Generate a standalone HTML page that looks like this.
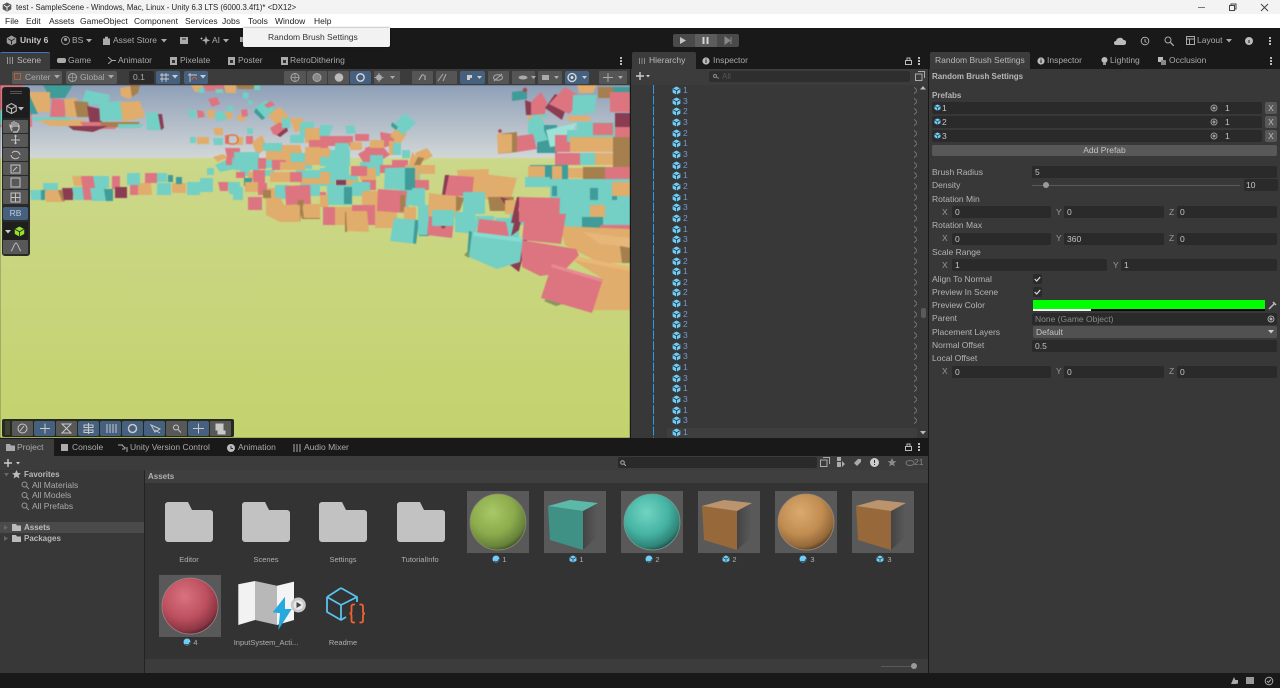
<!DOCTYPE html>
<html><head><meta charset="utf-8"><title>Unity</title>
<style>
html,body{margin:0;padding:0;width:1280px;height:688px;overflow:hidden;background:#191919}
body{font-family:"Liberation Sans",sans-serif;font-size:8.5px;color:#bdbdbd;position:relative}
div,span,svg{position:absolute}
.t{white-space:nowrap;line-height:11px;height:11px}
.d{color:#222}
.f{background:#2a2a2a;border-radius:2px;height:12px;color:#c4c4c4;line-height:12px;padding-left:3px;box-sizing:border-box}
.b{background:#585858;border-radius:2px}
.u{background:#46607f;border-radius:2px}
.g{background:#585858;border-radius:1px}
.l{left:932px;color:#b4b4b4}
.c{text-align:center;font-size:7.5px;color:#b0b0b0;width:76px}
.tp{fill:#dd7580}.tt{fill:#74cfc5}.to{fill:#e0ad6c}.dp{fill:#8a3d52}.dt{fill:#3f9c99}.do{fill:#a67f4e}
#h{left:667px;top:85px;width:250px;height:353px;overflow:hidden}
#h p{margin:0;position:relative;height:10.67px;line-height:10.67px;padding-left:16px;color:#7398d2;font-size:8.5px}
#h p svg{left:5px;top:1px;width:9px;height:9px}
#h p b{position:absolute;left:245px;top:3px;width:4px;height:4px;border-top:1px solid #777;border-right:1px solid #777;transform:rotate(45deg)}
</style></head>
<body>
<svg width="0" height="0" style="left:0;top:0"><defs>
<g id="c"><path d="M5 .5 9.3 2.8V7.3L5 9.6.7 7.3V2.8z" fill="#6fcdf7"/><path d="M1 3 5 5.2 9 3M5 5.2V9.4" stroke="#222" stroke-width=".8" fill="none"/></g>
<g id="fo"><path d="M0 3a3 3 0 0 1 3-3h20l4 8h18a3 3 0 0 1 3 3v26a3 3 0 0 1-3 3H3a3 3 0 0 1-3-3z" fill="#c2c2c2"/></g>
<radialGradient id="sg" cx=".4" cy=".33" r=".72"><stop offset="0" stop-color="#a9c866"/><stop offset=".55" stop-color="#8aaa4c"/><stop offset=".85" stop-color="#66823a"/><stop offset="1" stop-color="#35441f"/></radialGradient>
<radialGradient id="st" cx=".4" cy=".33" r=".72"><stop offset="0" stop-color="#72d4c2"/><stop offset=".55" stop-color="#45b3a3"/><stop offset=".85" stop-color="#2f8478"/><stop offset="1" stop-color="#15433c"/></radialGradient>
<radialGradient id="so" cx=".4" cy=".33" r=".72"><stop offset="0" stop-color="#dba970"/><stop offset=".55" stop-color="#c08c50"/><stop offset=".85" stop-color="#93683a"/><stop offset="1" stop-color="#46301a"/></radialGradient>
<radialGradient id="sr" cx=".4" cy=".33" r=".72"><stop offset="0" stop-color="#d9727f"/><stop offset=".55" stop-color="#bd505f"/><stop offset=".85" stop-color="#8c3644"/><stop offset="1" stop-color="#471c23"/></radialGradient>
<linearGradient id="sky" x1="0" y1="0" x2="0" y2="1"><stop offset="0" stop-color="#8a9cb6"/><stop offset="1" stop-color="#d3d8d8"/></linearGradient>
<linearGradient id="gr" x1="0" y1="0" x2="0" y2="1"><stop offset="0" stop-color="#ccd88a"/><stop offset="1" stop-color="#c4d26d"/></linearGradient>
<linearGradient id="cs" x1="0" y1="0" x2="1" y2="0"><stop offset="0" stop-color="#444"/><stop offset="1" stop-color="#5a5a5a"/></linearGradient>
</defs></svg>

<!-- title & menu -->
<div style="left:0;top:0;width:1280px;height:14px;background:#f3f3f3"></div>
<div style="left:0;top:14px;width:1280px;height:14px;background:#fff"></div>
<svg style="left:2px;top:2px" width="10" height="10" viewBox="0 0 10 10"><path d="M5 .5 9.3 2.8V7.3L5 9.6.7 7.3V2.8z" fill="#555"/><path d="M2 3.4 5 5.2 8 3.4M5 5.2V8.6" stroke="#fff" stroke-width=".9" fill="none"/></svg>
<div class="t d" style="left:16px;top:2px;font-size:7.8px">test - SampleScene - Windows, Mac, Linux - Unity 6.3 LTS (6000.3.4f1)* &lt;DX12&gt;</div>
<div class="t d" style="left:5px;top:16px">File</div>
<div class="t d" style="left:26px;top:16px">Edit</div>
<div class="t d" style="left:49px;top:16px">Assets</div>
<div class="t d" style="left:80px;top:16px">GameObject</div>
<div class="t d" style="left:134px;top:16px">Component</div>
<div class="t d" style="left:185px;top:16px">Services</div>
<div class="t d" style="left:222px;top:16px">Jobs</div>
<div class="t d" style="left:248px;top:16px">Tools</div>
<div class="t d" style="left:275px;top:16px">Window</div>
<div class="t d" style="left:314px;top:16px">Help</div>
<svg style="left:1195px;top:2px" width="85" height="11" viewBox="0 0 85 11"><path d="M3 5.500h7" stroke="#777" stroke-width="1"/><path d="M34.500 3.500h5v5h-5zM36 3.500V2h5v5h-1.500" stroke="#444" fill="none"/><path d="M66 2l7 7M73 2l-7 7" stroke="#444"/></svg>

<!-- toolbar -->
<div style="left:0;top:28px;width:1280px;height:24px;background:#191919"></div>
<svg style="left:6px;top:35px" width="11" height="11" viewBox="0 0 10 10"><path d="M5 .5 9.300 2.800V7.300L5 9.600.7 7.300V2.800z" fill="#999"/><path d="M2 3.400 5 5.200 8 3.400M5 5.200V8.600" stroke="#222" stroke-width=".9" fill="none"/></svg>
<div class="t" style="left:20px;top:35px;font-weight:bold;color:#c8c8c8">Unity 6</div>
<svg style="left:61px;top:36px" width="9" height="9"><circle cx="4.500" cy="4.500" r="4" fill="none" stroke="#999"/><circle cx="4.500" cy="3.500" r="1.600" fill="#999"/></svg>
<div class="t" style="left:72px;top:35px;color:#aaa">BS</div>
<svg style="left:86px;top:39px" width="6" height="4"><path d="M0 0h6L3 3.500z" fill="#aaa"/></svg>
<svg style="left:103px;top:36px" width="7" height="9"><path d="M0 2.500h7V9H0zM2 2.500V.7h3v1.800" fill="#aaa"/></svg>
<div class="t" style="left:113px;top:35px;color:#aaa">Asset Store</div>
<svg style="left:161px;top:39px" width="6" height="4"><path d="M0 0h6L3 3.500z" fill="#aaa"/></svg>
<svg style="left:180px;top:37px" width="8" height="7"><path d="M0 0h8v7H0z" fill="#aaa"/><path d="M2 2h4" stroke="#222"/></svg>
<svg style="left:200px;top:36px" width="10" height="9"><path d="M6 0l1 3 3 1.500-3 1L6 9 5 5.500 2 4.500l3-1.500zM1.500 1l.5 1 1 .5-1 .5-.5 1-.5-1-1-.5 1-.5z" fill="#aaa"/></svg>
<div class="t" style="left:212px;top:35px;color:#aaa">AI</div>
<svg style="left:223px;top:39px" width="6" height="4"><path d="M0 0h6L3 3.500z" fill="#aaa"/></svg>
<div style="left:240px;top:37px;width:3px;height:5px;background:#aaa"></div>
<div style="left:243px;top:28px;width:147px;height:19px;background:#f2f2f2;border-radius:0 0 2px 2px;box-shadow:0 0 2px #0008"></div>
<div class="t" style="left:268px;top:32px;color:#333">Random Brush Settings</div>
<div style="left:673px;top:34px;width:66px;height:13px;background:#4a4a4a;border-radius:2px"></div>
<div style="left:695px;top:34px;width:22px;height:13px;background:#5c5c5c"></div>
<svg style="left:673px;top:34px" width="66" height="13"><path d="M7 3l6 3.500-6 3.500z" fill="#c4c4c4"/><path d="M30.500 3v7M34.500 3v7" stroke="#d4d4d4" stroke-width="2"/><path d="M52 3l5 3.500-5 3.500zM58 3v7" fill="#888" stroke="#888"/></svg>
<svg style="left:1114px;top:37px" width="12" height="8"><path d="M2 8a2 2 0 0 1 0-4 4 4 0 0 1 7.500-1A2.500 2.500 0 0 1 10 8z" fill="#bbb"/></svg>
<svg style="left:1140px;top:36px" width="10" height="10"><circle cx="5" cy="5" r="3.800" fill="none" stroke="#aaa"/><path d="M5 3v2.500l1.500 1" fill="none" stroke="#aaa"/></svg>
<svg style="left:1164px;top:36px" width="10" height="10"><circle cx="4" cy="4" r="3" fill="none" stroke="#aaa"/><path d="M6.500 6.500L10 10" stroke="#aaa" stroke-width="1.300"/></svg>
<svg style="left:1186px;top:36px" width="9" height="9"><path d="M.5.500h8v8h-8zM.5 3h8M3.500 3v5.500" fill="none" stroke="#aaa"/></svg>
<div class="t" style="left:1197px;top:35px;color:#aaa">Layout</div>
<svg style="left:1226px;top:39px" width="6" height="4"><path d="M0 0h6L3 3.500z" fill="#aaa"/></svg>
<svg style="left:1245px;top:37px" width="8" height="8"><circle cx="4" cy="4" r="4" fill="#bbb"/><path d="M4 3v3" stroke="#222"/></svg>
<svg style="left:1269px;top:37px" width="2" height="8"><path d="M0 0h2v2H0zM0 3h2v2H0zM0 6h2v2H0z" fill="#bbb"/></svg>

<!-- scene tabs -->
<div style="left:0;top:52px;width:631px;height:17px;background:#191919"></div>
<div style="left:0;top:52px;width:50px;height:17px;background:#3c3c3c;border-top:1px solid #3a78c2;box-sizing:border-box;border-radius:2px 2px 0 0"></div>
<div style="left:7px;top:57px;width:7px;height:7px;background:repeating-linear-gradient(90deg,#999 0 1px,transparent 1px 2.500px)"></div>
<div class="t" style="left:17px;top:55px;color:#bbb">Scene</div>
<div style="left:57px;top:58px;width:9px;height:5px;background:#aaa;border-radius:2px"></div>
<div class="t" style="left:68px;top:55px;color:#aaa">Game</div>
<svg style="left:108px;top:57px" width="8" height="7"><path d="M0 0l4 3.500L0 7M4 3.500h4" stroke="#aaa" fill="none"/></svg>
<div class="t" style="left:118px;top:55px;color:#aaa">Animator</div>
<svg style="left:170px;top:56px" width="7" height="9"><path d="M0 1h7v8H0z" fill="#aaa"/><path d="M2 4h3v3H2z" fill="#333"/></svg>
<div class="t" style="left:180px;top:55px;color:#aaa">Pixelate</div>
<svg style="left:228px;top:56px" width="7" height="9"><path d="M0 1h7v8H0z" fill="#aaa"/><path d="M2 4h3v3H2z" fill="#333"/></svg>
<div class="t" style="left:238px;top:55px;color:#aaa">Poster</div>
<svg style="left:281px;top:56px" width="7" height="9"><path d="M0 1h7v8H0z" fill="#aaa"/><path d="M2 4h3v3H2z" fill="#333"/></svg>
<div class="t" style="left:290px;top:55px;color:#aaa">RetroDithering</div>
<svg style="left:620px;top:57px" width="2" height="8"><path d="M0 0h2v2H0zM0 3h2v2H0zM0 6h2v2H0z" fill="#bbb"/></svg>

<!-- scene toolbar -->
<div style="left:0;top:69px;width:631px;height:16px;background:#3c3c3c"></div>
<div class="b" style="left:12px;top:71px;width:50px;height:13px"></div>
<div style="left:14px;top:73px;width:7px;height:7px;border:1px solid #b3603c;box-sizing:border-box"></div>
<div class="t" style="left:25px;top:72px;color:#aaa">Center</div>
<svg style="left:54px;top:75px" width="6" height="4"><path d="M0 0h6L3 3.500z" fill="#aaa"/></svg>
<div class="b" style="left:66px;top:71px;width:51px;height:13px"></div>
<svg style="left:68px;top:73px" width="9" height="9"><circle cx="4.500" cy="4.500" r="4" fill="none" stroke="#aaa"/><path d="M.5 4.500h8M4.500.5v8" stroke="#aaa" stroke-width=".6"/></svg>
<div class="t" style="left:80px;top:72px;color:#aaa">Global</div>
<svg style="left:108px;top:75px" width="6" height="4"><path d="M0 0h6L3 3.500z" fill="#aaa"/></svg>
<div class="f" style="left:129px;top:71px;width:25px;height:13px;line-height:13px;padding-left:4px;color:#aaa">0.1</div>
<div class="u" style="left:156px;top:71px;width:24px;height:13px"></div>
<svg style="left:160px;top:73px" width="9" height="9"><path d="M2 0v9M6 0v9M0 2h9M0 6h9" stroke="#ccc" stroke-width=".9"/></svg>
<svg style="left:172px;top:75px" width="6" height="4"><path d="M0 0h6L3 3.500z" fill="#ccc"/></svg>
<div class="u" style="left:184px;top:71px;width:24px;height:13px"></div>
<svg style="left:188px;top:73px" width="9" height="9"><path d="M2 0v9M0 2h9" stroke="#ccc" stroke-width=".9"/><path d="M4 7a2.500 2.500 0 0 1 5 0" stroke="#e06030" fill="none"/></svg>
<svg style="left:200px;top:75px" width="6" height="4"><path d="M0 0h6L3 3.500z" fill="#ccc"/></svg>
<div class="g" style="left:284px;top:71px;width:22px;height:13px;background:#555"></div>
<div class="g" style="left:307px;top:71px;width:20px;height:13px;background:#555"></div>
<div class="g" style="left:328px;top:71px;width:21px;height:13px;background:#555"></div>
<div class="u" style="left:350px;top:71px;width:21px;height:13px"></div>
<div class="g" style="left:374px;top:71px;width:26px;height:13px;background:#555"></div>
<svg style="left:284px;top:71px" width="120" height="13"><circle cx="11" cy="6.500" r="4" fill="none" stroke="#aaa"/><path d="M7 6.500h8M11 2.500v8" stroke="#aaa" stroke-width=".7"/><circle cx="33" cy="6.500" r="4" fill="#888" stroke="#aaa"/><circle cx="55" cy="6.500" r="4.300" fill="#bbb"/><circle cx="76.500" cy="6.500" r="3.700" fill="none" stroke="#ddd" stroke-width="1.300"/><circle cx="95" cy="6.500" r="3" fill="#aaa"/><path d="M95 2v9M90.500 6.500h9" stroke="#aaa"/><path d="M106 5h5l-2.500 3z" fill="#aaa"/></svg>
<div class="g" style="left:412px;top:71px;width:21px;height:13px;background:#555"></div>
<div class="g" style="left:436px;top:71px;width:21px;height:13px;background:#555"></div>
<div class="u" style="left:460px;top:71px;width:25px;height:13px"></div>
<div class="g" style="left:488px;top:71px;width:21px;height:13px;background:#555"></div>
<div class="g" style="left:512px;top:71px;width:23px;height:13px;background:#555"></div>
<div class="g" style="left:538px;top:71px;width:24px;height:13px;background:#555"></div>
<div class="u" style="left:565px;top:71px;width:24px;height:13px"></div>
<div class="g" style="left:599px;top:71px;width:28px;height:13px;background:#555"></div>
<svg style="left:412px;top:71px" width="216" height="13"><path d="M7 9l3-5h2M13 4v5" stroke="#bbb" fill="none"/><path d="M31 3l-5 7M34 3l-3 7" stroke="#aaa" fill="none"/><path d="M55 4h5v3h-2v2h-3z" fill="#ccc"/><path d="M65 5h5l-2.500 3z" fill="#ccc"/><ellipse cx="86" cy="6.500" rx="4.500" ry="2.800" fill="none" stroke="#aaa"/><path d="M82 10l8-7" stroke="#aaa"/><ellipse cx="111" cy="6.500" rx="4.500" ry="2" fill="#aaa"/><path d="M119 5h5l-2.500 3z" fill="#aaa"/><path d="M130 4h7v5h-7z" fill="#aaa"/><path d="M142 5h5l-2.500 3z" fill="#aaa"/><circle cx="160" cy="6.500" r="4" fill="none" stroke="#ddd" stroke-width="1.300"/><circle cx="160" cy="6.500" r="1.500" fill="#ddd"/><path d="M170 5h5l-2.500 3z" fill="#ccc"/><path d="M196 2v9M191 6.500h10" stroke="#aaa"/><path d="M206 5h5l-2.500 3z" fill="#aaa"/></svg>

<!-- scene -->
<div style="left:0;top:85px;width:630px;height:353px;overflow:hidden">
<svg style="left:0;top:0;filter:blur(.5px)" width="630" height="353" viewBox="0 85 630 353">
<rect x="-5" y="80" width="640" height="79" fill="url(#sky)"/>
<rect x="-5" y="158" width="640" height="285" fill="url(#gr)"/>
<!-- back left cloud -->
<path class="dt" d="M43 85h30l-8 13H50z"/><path class="tp" d="M0 85h22l10 20v22H0z"/><path class="tt" d="M0 110h20l10 10-4 5H0z"/>
<path class="to" d="M22 92h28v20H30z"/><path class="dt" d="M14 92h14l10 22H22z"/>
<path class="tt" d="M86 90l24 5-2 10-27-1z"/><path class="to" d="M120 88l16-3 2 8-9 6-8-3z"/><path class="do" d="M130 85h10l-2 8-6 4z"/>
<path class="tp" d="M52 98l14 2-1 17H50z"/><path class="to" d="M64 99l12-1 5 19H66z"/><path class="do" d="M74 101l14 1 2 15H77z"/><path class="dp" d="M87 106l14 3 1 16H90z"/>
<path class="tt" d="M99 103l22-2 4 19-25 1z"/><path class="to" d="M120 102l20-1 5 16-22 5z"/><path class="tt" d="M146 112l13 1 3 17h-15z"/><path class="dp" d="M158 114l4 0 2 14-3 2z"/>
<path class="tt" d="M30 117h40v4H35z"/><path class="to" d="M38 120h48l-4 6H50z"/><path class="tp" d="M80 122h40l-5 7H85z"/><path class="do" d="M100 122h40l-3 5h-35z"/><path class="dp" d="M68 126h40l-15 6-20-2z"/><path class="tt" d="M118 124h26l-4 4h-22z"/>
<!-- middle cloud top -->
<path class="to" d="M191 85h12v7h-8zM224 85h12v8h-10z"/><path class="tp" d="M204 85h20v6h-18z"/><path class="tt" d="M198 88h6v5h-5zM215 89h8v4h-7zM253 85h7v5h-6z"/><path class="do" d="M236 85h18v4h-16z"/>
<path class="tt" d="M243 92l6 1-1 6-5-1zM226 107l6-2 2 5-6 2zM248 100l5 1-1 4-4-1z"/><path class="tp" d="M208 99l9-2 3 7-8 3zM197 110l6 1 2 6-7 1z"/><path class="to" d="M207 110h8v8h-7zM216 113h6v8h-5zM225 112h7v7h-6zM237 115h8v6h-7z"/><path class="tt" d="M188 110h8v8h-6zM214 113l10-2 3 8-10 3z"/><path class="to" d="M267 114l13-7 10 11-12 9z"/><path class="tt" d="M254 108l12-8 9 10-13 10z"/><path class="dt" d="M254 112l8 8 3-2-9-10z"/><path class="tp" d="M264 105l7-4 4 4-7 3zM241 110l6-1 1 7-6 1z"/>
<path class="tt" d="M190 137h6v6h-6zM213 138h10v7h-9z"/><path class="to" d="M197 137h12v7h-12zM237 137h6v8h-6z"/><path class="tp" d="M225 135h4v9h-4zM246 136h7v8h-7z"/><path class="tp" d="M270 128l10-6 7 7-6 8-8-3z"/><path class="dp" d="M277 135l10-8 1 4-8 6z"/><path class="to" d="M290 118h12l5 10-12 4zM213 128h10v7h-8z"/><path class="tt" d="M300 122h14v16h-14zM282 118h8v10h-8zM247 128h6v6h-6zM290 135h14v8h-14z"/><path class="to" d="M305 128h15v15h-15zM252 142l10-7 5 12-10 9z"/><path class="tp" d="M309 140h11v14h-11zM272 150h10v5h-10z"/>
<!-- mid body -->
<path class="to" d="M266 145h34l6 20h-40z"/><path class="tp" d="M225 148h15v14h-12z"/><path class="tt" d="M262 143h20v8h-18zM290 153h22v16h-20zM256 160h16v8h-16z"/>
<path class="tt" d="M215 165l18-8 2 12-15 3zM234 152h25v18h-25z"/><path class="tp" d="M226 157h6v8h-6zM258 158h8v11h-8zM309 157h11v8h-11zM272 160h14v10h-14z"/><path class="to" d="M280 162h25v8h-25zM305 147h15v18h-15zM213 157l10-3 5 3-10 5z"/>
<path class="tt" d="M240 168h10v8h-10zM262 170h12v6h-12zM296 170h24v10h-24zM207 168h7v7h-7z"/><path class="to" d="M248 172h14v8h-14zM270 172h26v10h-26zM300 178h20v6h-20z"/><path class="tp" d="M253 170h12v14h-12zM236 172h9v6h-9zM290 172h12v10h-12z"/><path class="dt" d="M244 178h8v8h-8z"/>
<path class="tt" d="M228 182h12v12h-11zM275 185h14v14h-14zM300 184h20v12h-20z"/><path class="to" d="M245 182h13v10h-13z M263 188h12v12h-10z"/><path class="tp" d="M218 182h10v9h-8zM258 183h9v12h-9z"/>
<path class="tp" d="M285 186l25-1 1 19-25 1z"/><path class="do" d="M300 205l20 2v12h-18z"/><path class="to" d="M302 204h18v14h-16z"/><path class="do" d="M298 200l6 0-4 22h-5z"/>
<path class="to" d="M266 198l14-1 4 8h16v17h-20l-14-7z"/><path class="tp" d="M248 197h14v13h-14z"/><path class="do" d="M263 190h8v8h-8z"/>
<path class="tt" d="M30 190h15v10H31zM43 183h15v9H43z"/><path class="dt" d="M41 190h4v10h-4z"/><path class="to" d="M45 190h16l4 12H46z"/><path class="do" d="M58 190h4l3 11h-3z"/><path class="dp" d="M62 188h11v12h-9z"/>
<path class="tt" d="M72 187h12l1 13H74z"/><path class="to" d="M72 176h10v10H74z"/><path class="tp" d="M81 176h14v24H84z"/><path class="tt" d="M93 176h16v12H95zM90 188h16l2 13H92z"/><path class="dt" d="M104 189h9v12h-7z"/><path class="tp" d="M112 176h8v13h-8z"/><path class="dp" d="M115 187h12v11h-12z"/><path class="tp" d="M130 185h10v10h-10z"/><path class="to" d="M138 183h13l1 12h-14z"/><path class="tt" d="M127 173h13v12h-13z"/><path class="tp" d="M145 173h12v10h-12z"/><path class="tt" d="M157 173h10v9h-10zM157 183h14v12h-14z"/><path class="to" d="M172 183h14v10h-14z"/><path class="dt" d="M168 175h5v7h-5zM176 177h6v7h-6z"/><path class="tt" d="M187 182h13v13h-13zM200 178h13v14h-13z"/><path class="tt" d="M233 187h10v13h-10z"/>
<!-- mid right -->
<path class="tt" d="M320 125h13l-4 12h-10zM320 150h30v16h-30zM345 126l9-1 2 8-9 1zM325 165h24v15h-24z"/><path class="tp" d="M320 136h8v20h-8zM327 136h26v10h-26zM380 132l12 2 4 10-14 4zM355 134h14v7h-14zM358 154l7-4 11 8-9 10z"/><path class="tp" d="M365 148l15-5 10 12-12 7-13-5z"/><path class="to" d="M397 127l10 7-7 10-10-8zM350 142h12v8h-12zM370 140h14v8h-14zM320 148h10v9h-10zM389 141h8v14h-8z"/><path class="tt" d="M405 113l11 10-13 12-11-9z"/><path class="dt" d="M392 122l6 5-2 3-5-4z"/><path class="tt" d="M370 155h13v15h-13zM393 143h8v12h-8zM402 150h8v8h-8zM335 143h14v8h-14z"/><path class="to" d="M415 153l12-5 6 8-13 7zM412 152l8 8v10h-12z"/><path class="do" d="M424 158l-4 8-6-1 4-8z"/><path class="tt" d="M335 166h14v8h-14zM360 162h20v14h-20z"/><path class="to" d="M360 168h16v12h-16zM417 165h18v9h-18z"/><path class="tp" d="M392 160h16v9h-16z"/><path class="tt" d="M320 168h15v18h-15zM348 175h10v12h-10zM410 170h10v15h-10zM400 185h14v20h-14z"/><path class="to" d="M320 172h10v12h-10zM345 180h14v11h-14zM405 165h14v18h-10z"/><path class="tp" d="M351 166h16v10h-16zM362 180h14v10h-14zM415 180h14v10h-14zM380 165h18v8h-18zM320 192h6v6h-6z"/>
<path class="dp" d="M336 180h10v5h-10z"/><path class="tt" d="M327 185h25v20h-25zM352 182h18v14h-18z"/><path class="dt" d="M344 187h8v17h-8z"/><path class="to" d="M362 191h16v20h-16zM320 195h8v12h-8z"/><path class="tt" d="M385 168l30-1v23l-31-1z"/><path class="dt" d="M405 168h10v22h-10z"/>
<path class="tp" d="M323 207h12v18h-12z"/><path class="to" d="M335 207h17v18h-17z"/><path class="tp" d="M352 205h23v20h-23z"/><path class="do" d="M345 212h2v20h-2z"/><path class="to" d="M346 211h21l2 21-22-1z"/><path class="to" d="M375 210h22v18h-22z"/><path class="tt" d="M395 190h10l5 22h-15zM412 188h13v18h-13z"/><path class="tp" d="M378 189l29 2-2 22-28-2z"/><path class="do" d="M400 195h5v16h-5z"/><path class="to" d="M404 207h12v13h-12z"/>
<path class="tt" d="M394 218l25 2-3 24-26-3z"/><path class="dt" d="M415 220l4 0-3 24-3-1z"/><path class="dt" d="M419 212h10v24h-10z"/><path class="tt" d="M418 205h12v30h-12z"/>
<path class="to" d="M457 170l32-1-4 26h-25z"/><path class="tp" d="M445 175l29 2-2 20-29-2z"/><path class="dp" d="M445 175h4l-4 20h-3z"/><path class="tt" d="M463 192h22v22h-22z"/><path class="tp" d="M429 216l25 4-2 18-25-3z"/><path class="dp" d="M433 217l20 3-10 9z"/><path class="to" d="M429 193l33 4-4 21-30-3z"/><path class="do" d="M456 196l8 2-4 12-4 1z"/>
<path class="tt" d="M455 212h20l2 22-22-2zM432 210h22v16h-22z"/><path class="tt" d="M476 216h18v12h-18zM495 218h24v20h-24z"/><path class="to" d="M485 174l32 4-7 24-25-3z"/><path class="do" d="M488 197h26l-3 14h-21z"/><path class="dp" d="M500 197l10 3-4 6z"/><path class="tp" d="M479 219l27 3 3 15-32-4z"/>
<!-- right cluster: upper -->
<path class="tt" d="M577 122h53v20h-53z"/><path class="tp" d="M593 123h20v12h-20zM615 117h15v21h-15z"/><path class="dt" d="M537 125h20v28h-20z"/><path d="M546 130l31-7-12 22-15 2z" fill="#9de2d6"/><path class="tp" d="M555 135h15v17h-15z"/><path class="tt" d="M567 130h16v12h-16z"/><path class="to" d="M570 137h43v15h-43z"/><path class="do" d="M613 137h17v15h-17z"/>
<path class="tt" d="M530 105h10l8 12-16 2z"/><path class="tt" d="M527 130l15-5 6 15-14 3z"/><path class="dp" d="M525 100l8 3v12l-7 0z"/><path class="tp" d="M531 102l10-10 6 10-2 12-14 1z"/>
<path class="dt" d="M512 92l15-2v9l-15 2z"/><circle cx="525" cy="90" r="2.200" fill="#b04452"/><circle cx="500" cy="131" r="1.800" fill="#b04452"/>
<path class="dp" d="M545 108l17 12 7-20-14-6z"/><path class="tp" d="M565 87l18 11-14 16-20-10z"/><path class="tt" d="M573 95l24 0-3 18-22 2z"/><path class="to" d="M528 116h14v6h-14zM568 116h22v5h-22zM577 85h20l-4 8h-14z"/><path class="do" d="M598 87h15v11h-15z"/><path class="dt" d="M613 87h17v15h-17z"/><path class="tp" d="M610 92h20v20h-20z"/><path class="dp" d="M615 113h15v14h-15z"/>
<path class="do" d="M498 134l19-2v20l-19 2z"/><path class="to" d="M497 134h15v18l-14 2z"/><path class="tp" d="M517 136l16-2 4 15-20 3z"/><path class="tt" d="M528 124a8 8 0 0 1 16 0v6h-16z"/>
<!-- right cluster: middle -->
<path class="tp" d="M555 153h25v12h-25z"/><path class="tt" d="M580 153h15v12h-15z"/><path class="to" d="M595 153h18v12h-18z"/><path class="do" d="M613 152h17v16h-17z"/><path class="dt" d="M530 165h25v15h-25zM555 165h13v15h-13z"/>
<path class="to" d="M528 166h17v12h-17zM552 166h10v13h-10zM568 168h15v10h-15z"/><path class="do" d="M583 167h24v13h-24z"/><path class="tp" d="M605 167h25v15h-25z"/>
<path class="tt" d="M525 177h25v10h-25zM550 179h80v22h-80z"/><path class="dt" d="M552 186h8v10h-8zM590 188h8v12h-8z"/><path class="tt" d="M557 183h26v17h-26z"/><path class="to" d="M612 182h18v14h-18z"/><path class="dt" d="M612 196h5v6h-5z"/>
<path class="tt" d="M552 201h54v26h-54z"/><path class="to" d="M590 205h20v12h-20z"/><path class="dt" d="M582 217h21v13h-21z"/><path class="tt" d="M605 200h25v28h-25z"/><path class="tp" d="M600 225h30v6h-30z"/>
<path class="tt" d="M510 200h45v25h-45z"/><path class="to" d="M505 200h15v14h-15z"/>
<!-- right cluster: lower -->
<path class="to" d="M560 226l70 3v34h-30l-35-18z"/><path d="M583 232l47 6v9l-30-3z" fill="#e6b779"/><path class="do" d="M620 246l10 2v15h-8z"/>
<path class="to" d="M563 254l67 13v43H592l11-31z"/><path d="M563 254l67 13v4l-67-13z" fill="#eab778"/>
<path class="dp" d="M517 197l3 0-3 26-6 0z"/><path class="dp" d="M523 212l-4 18-8 6 6-25z"/><path class="tp" d="M519 197l41 1-1 25-40-1z"/><path class="tp" d="M525 212l41 2-5 30-39-4z"/><path class="dp" d="M520 240h7l-8 32-9-7z"/><path class="tp" d="M521 240l55 9 3 6-17 18-22 3-18-9z"/>
<path class="tt" d="M472 232l51 6-3 24-23 7-28-12z"/><path class="dt" d="M472 232l-3 25-2-1 2-25z"/><path d="M474 232l49 6-2 4-48-6z" fill="#85dcd2"/>
<path d="M565 285l-21 16 12 5 10-3z" fill="#7f9a5d"/><path d="M469 250l-5 5 5 3z" fill="#7f9a5d"/>
<path class="tp" d="M552 264l51 15-11 34-51-15z"/><path d="M552 264l51 15-1 3-51-15z" fill="#e78a94"/>
<rect x="227" y="135" width="11" height="9" rx="4" fill="none" stroke="#e8671f" stroke-width="1.300"/>
</svg>
</div>

<!-- left overlay -->
<div style="left:2px;top:87px;width:28px;height:169px;background:#232323;border-radius:3px;opacity:.96"></div>
<div style="left:3px;top:88px;width:26px;height:30px;background:#1d1d1d"></div>
<div style="left:10px;top:91px;width:12px;height:1px;background:#555"></div>
<div style="left:10px;top:93px;width:12px;height:1px;background:#555"></div>
<svg style="left:6px;top:103px" width="11" height="11" viewBox="0 0 10 10"><path d="M5 .5 9.300 2.800V7.300L5 9.600.7 7.300V2.800z" fill="none" stroke="#bbb"/><path d="M.9 3 5 5.200 9 3M5 5.200V9.400" stroke="#bbb" fill="none"/></svg>
<svg style="left:18px;top:107px" width="6" height="4"><path d="M0 0h6L3 3.500z" fill="#bbb"/></svg>
<div class="g" style="left:3px;top:120px;width:25px;height:13px"></div>
<div class="g" style="left:3px;top:134px;width:25px;height:13px"></div>
<div class="g" style="left:3px;top:148px;width:25px;height:13px"></div>
<div class="g" style="left:3px;top:162px;width:25px;height:13px"></div>
<div class="g" style="left:3px;top:176px;width:25px;height:13px"></div>
<div class="g" style="left:3px;top:190px;width:25px;height:14px"></div>
<svg style="left:3px;top:120px" width="25" height="84" fill="none" stroke="#c4c4c4"><path d="M9 11L7 6v-1l2 2V2M11 7V1M13 7V2M15 7V3M15 7l1-1v3l-2 3H10" stroke-width="1.200"/><path d="M12.500 15v9M8 20h9M12.500 15l-1 1.500M12.500 15l1 1.500M12.500 24l-1-1.500M12.500 24l1-1.500" /><path d="M17 35a4.500 4.500 0 0 0-8-2M8 35a4.500 4.500 0 0 0 8 2"/><path d="M8 45h9v8H8zM10 51l4-4" /><path d="M8 58h9v9H8z"/><path d="M8 73h9v9H8zM12.500 73v9M8 77.500h9"/></svg>
<div class="u" style="left:3px;top:207px;width:25px;height:13px;text-align:center;line-height:13px;color:#c4ccd6;font-size:8.500px">RB</div>
<div style="left:3px;top:222px;width:25px;height:18px;background:#1f1f1f"></div>
<svg style="left:5px;top:230px" width="6" height="4"><path d="M0 0h6L3 3.500z" fill="#ccc"/></svg>
<svg style="left:14px;top:226px" width="11" height="11" viewBox="0 0 10 10"><path d="M5 .5 9.300 2.800V7.300L5 9.600.7 7.300V2.800z" fill="#97e02c"/><path d="M1 3 5 5.200 9 3M5 5.200V9.400" stroke="#222" stroke-width=".8" fill="none"/></svg>
<div class="g" style="left:3px;top:240px;width:25px;height:14px"></div>
<svg style="left:10px;top:242px" width="12" height="10" fill="none" stroke="#bbb"><path d="M1 9c2-1 3-8 5-8s3 7 5 8"/></svg>

<!-- bottom overlay -->
<div style="left:2px;top:419px;width:232px;height:18px;background:#242a1e;border-radius:2px"></div>
<div style="left:5px;top:421px;width:5px;height:14px;background:#3d4133"></div>
<div class="g" style="left:12px;top:421px;width:21px;height:15px"></div>
<div class="u" style="left:34px;top:421px;width:21px;height:15px"></div>
<div class="g" style="left:56px;top:421px;width:21px;height:15px"></div>
<div class="u" style="left:78px;top:421px;width:21px;height:15px"></div>
<div class="u" style="left:100px;top:421px;width:21px;height:15px"></div>
<div class="u" style="left:122px;top:421px;width:21px;height:15px"></div>
<div class="u" style="left:144px;top:421px;width:21px;height:15px"></div>
<div class="g" style="left:166px;top:421px;width:21px;height:15px"></div>
<div class="u" style="left:188px;top:421px;width:21px;height:15px"></div>
<div class="g" style="left:210px;top:421px;width:21px;height:15px"></div>
<svg style="left:12px;top:421px" width="220" height="15" fill="none" stroke="#c8c8c8"><circle cx="10.500" cy="7.500" r="4.500"/><path d="M8 10l4-5"/><path d="M33 2.500v10M28 7.500h10"/><path d="M50 3h9l-9 9h9zM50 3l9 9"/><path d="M72 4h9v2.500h-9zM72 9h9v2.500h-9zM76.500 2v11"/><path d="M95 3v9M98 3v9M101 3v9M104 3v9"/><circle cx="120.500" cy="7.500" r="4" stroke-width="1.500"/><path d="M139 4l9 4-5 3zM143 9l5 3"/><circle cx="164" cy="6.500" r="2.500"/><path d="M166 8.500l3 3"/><path d="M186.500 2.500v10M181 7.500h11"/><path d="M204 3h7v6h-7zM206 10h7v3h-7z" fill="#c8c8c8"/></svg>

<!-- hierarchy -->
<div style="left:631px;top:52px;width:297px;height:386px;background:#383838"></div>
<div style="left:631px;top:52px;width:297px;height:17px;background:#191919"></div>
<div style="left:632px;top:52px;width:64px;height:17px;background:#3c3c3c;border-radius:2px 2px 0 0"></div>
<div style="left:639px;top:58px;width:6px;height:6px;background:repeating-linear-gradient(90deg,#888 0 1px,transparent 1px 2.500px)"></div>
<div class="t" style="left:649px;top:55px;color:#bbb">Hierarchy</div>
<svg style="left:702px;top:57px" width="8" height="8"><circle cx="4" cy="4" r="3.600" fill="#bbb"/><path d="M4 3v3M4 1.500v1" stroke="#222"/></svg>
<div class="t" style="left:713px;top:55px;color:#aaa">Inspector</div>
<svg style="left:905px;top:57px" width="7" height="8" fill="none" stroke="#bbb"><path d="M.5 3.500h6v4h-6zM2 3.500V1h3v2.500"/></svg>
<svg style="left:918px;top:57px" width="2" height="8"><path d="M0 0h2v2H0zM0 3h2v2H0zM0 6h2v2H0z" fill="#bbb"/></svg>
<div style="left:631px;top:69px;width:297px;height:16px;background:#3c3c3c"></div>
<svg style="left:636px;top:71px" width="20" height="10"><path d="M4 1v8M0 5h8" stroke="#ccc" stroke-width="1.400"/><path d="M10 4h4l-2 2.500z" fill="#ccc"/></svg>
<div style="left:709px;top:71px;width:201px;height:11px;background:#2e2e2e;border-radius:2px"></div>
<div class="t" style="left:722px;top:71px;color:#555;font-size:8px">All</div>
<svg style="left:713px;top:74px" width="6" height="5"><circle cx="2" cy="2" r="1.500" fill="none" stroke="#888"/><path d="M3.500 3L6 4.500" stroke="#888"/></svg>
<svg style="left:915px;top:71px" width="10" height="10" fill="none" stroke="#aaa"><path d="M3 .5h6.500v6.500M.5 3h6.500v6.500H.5z"/></svg>
<svg style="left:653px;top:85px" width="1" height="353"><path d="M.5 0V353" stroke="#2a9aee" stroke-width="1" stroke-dasharray="9 1.670"/></svg>
<div id="h">
<p><svg viewBox="0 0 10 10"><use href="#c"/></svg>1<b></b></p>
<p><svg viewBox="0 0 10 10"><use href="#c"/></svg>3<b></b></p>
<p><svg viewBox="0 0 10 10"><use href="#c"/></svg>2<b></b></p>
<p><svg viewBox="0 0 10 10"><use href="#c"/></svg>3<b></b></p>
<p><svg viewBox="0 0 10 10"><use href="#c"/></svg>2<b></b></p>
<p><svg viewBox="0 0 10 10"><use href="#c"/></svg>1<b></b></p>
<p><svg viewBox="0 0 10 10"><use href="#c"/></svg>3<b></b></p>
<p><svg viewBox="0 0 10 10"><use href="#c"/></svg>2<b></b></p>
<p><svg viewBox="0 0 10 10"><use href="#c"/></svg>1<b></b></p>
<p><svg viewBox="0 0 10 10"><use href="#c"/></svg>2<b></b></p>
<p><svg viewBox="0 0 10 10"><use href="#c"/></svg>1<b></b></p>
<p><svg viewBox="0 0 10 10"><use href="#c"/></svg>3<b></b></p>
<p><svg viewBox="0 0 10 10"><use href="#c"/></svg>2<b></b></p>
<p><svg viewBox="0 0 10 10"><use href="#c"/></svg>1<b></b></p>
<p><svg viewBox="0 0 10 10"><use href="#c"/></svg>3<b></b></p>
<p><svg viewBox="0 0 10 10"><use href="#c"/></svg>1<b></b></p>
<p><svg viewBox="0 0 10 10"><use href="#c"/></svg>2<b></b></p>
<p><svg viewBox="0 0 10 10"><use href="#c"/></svg>1<b></b></p>
<p><svg viewBox="0 0 10 10"><use href="#c"/></svg>2<b></b></p>
<p><svg viewBox="0 0 10 10"><use href="#c"/></svg>2<b></b></p>
<p><svg viewBox="0 0 10 10"><use href="#c"/></svg>1<b></b></p>
<p><svg viewBox="0 0 10 10"><use href="#c"/></svg>2<b></b></p>
<p><svg viewBox="0 0 10 10"><use href="#c"/></svg>2<b></b></p>
<p><svg viewBox="0 0 10 10"><use href="#c"/></svg>3<b></b></p>
<p><svg viewBox="0 0 10 10"><use href="#c"/></svg>3<b></b></p>
<p><svg viewBox="0 0 10 10"><use href="#c"/></svg>3<b></b></p>
<p><svg viewBox="0 0 10 10"><use href="#c"/></svg>1<b></b></p>
<p><svg viewBox="0 0 10 10"><use href="#c"/></svg>3<b></b></p>
<p><svg viewBox="0 0 10 10"><use href="#c"/></svg>1<b></b></p>
<p><svg viewBox="0 0 10 10"><use href="#c"/></svg>3<b></b></p>
<p><svg viewBox="0 0 10 10"><use href="#c"/></svg>1<b></b></p>
<p><svg viewBox="0 0 10 10"><use href="#c"/></svg>3<b></b></p>
</div>
<div style="left:667px;top:428px;width:250px;height:10px;background:#3e3e3e"></div>
<div class="t" style="left:683px;top:427px;color:#7398d2">1</div>
<svg style="left:672px;top:428px" width="9" height="9" viewBox="0 0 10 10"><use href="#c"/></svg>
<svg style="left:920px;top:86px" width="6" height="4"><path d="M0 3.500h6L3 0z" fill="#bbb"/></svg>
<div style="left:921px;top:308px;width:5px;height:10px;background:#5a5a5a;border-radius:2px"></div>
<svg style="left:920px;top:431px" width="6" height="4"><path d="M0 0h6L3 3.500z" fill="#bbb"/></svg>

<!-- divider -->
<div style="left:630px;top:52px;width:1px;height:386px;background:#191919"></div>
<div style="left:928px;top:52px;width:1px;height:621px;background:#191919"></div>

<!-- inspector -->
<div style="left:929px;top:52px;width:351px;height:621px;background:#383838"></div>
<div style="left:929px;top:52px;width:351px;height:17px;background:#191919"></div>
<div style="left:930px;top:52px;width:100px;height:17px;background:#3c3c3c;border-radius:2px 2px 0 0"></div>
<div class="t" style="left:935px;top:55px;color:#b8b8b8">Random Brush Settings</div>
<svg style="left:1037px;top:57px" width="8" height="8"><circle cx="4" cy="4" r="3.600" fill="#bbb"/><path d="M4 3v3M4 1.500v1" stroke="#222"/></svg>
<div class="t" style="left:1047px;top:55px;color:#aaa">Inspector</div>
<svg style="left:1101px;top:57px" width="7" height="8"><circle cx="3.500" cy="3" r="3" fill="#bbb"/><path d="M2 6h3v2H2z" fill="#999"/></svg>
<div class="t" style="left:1110px;top:55px;color:#aaa">Lighting</div>
<svg style="left:1158px;top:57px" width="8" height="8"><path d="M0 0h5v5H0z" fill="#bbb"/><path d="M3 3h5v5H3z" fill="#888"/></svg>
<div class="t" style="left:1169px;top:55px;color:#aaa">Occlusion</div>
<svg style="left:1270px;top:57px" width="2" height="8"><path d="M0 0h2v2H0zM0 3h2v2H0zM0 6h2v2H0z" fill="#bbb"/></svg>
<div class="t l" style="top:71px;font-weight:bold;font-size:8px;color:#b8b8b8">Random Brush Settings</div>
<div class="t l" style="top:90px;font-weight:bold;font-size:8px">Prefabs</div>

<div class="f" style="left:932px;top:102px;width:290px;padding-left:10px">1</div>
<div class="f" style="left:932px;top:116px;width:290px;padding-left:10px">2</div>
<div class="f" style="left:932px;top:130px;width:290px;padding-left:10px">3</div>
<svg style="left:934px;top:104px" width="7" height="7" viewBox="0 0 10 10"><use href="#c"/></svg>
<svg style="left:934px;top:118px" width="7" height="7" viewBox="0 0 10 10"><use href="#c"/></svg>
<svg style="left:934px;top:132px" width="7" height="7" viewBox="0 0 10 10"><use href="#c"/></svg>
<svg style="left:1210px;top:104px" width="8" height="36" fill="none" stroke="#999"><circle cx="4" cy="4" r="3"/><circle cx="4" cy="4" r="1" fill="#999"/><circle cx="4" cy="18" r="3"/><circle cx="4" cy="18" r="1" fill="#999"/><circle cx="4" cy="32" r="3"/><circle cx="4" cy="32" r="1" fill="#999"/></svg>
<div class="f" style="left:1222px;top:102px;width:40px">1</div>
<div class="f" style="left:1222px;top:116px;width:40px">1</div>
<div class="f" style="left:1222px;top:130px;width:40px">1</div>
<div class="b" style="left:1265px;top:102px;width:12px;height:12px;text-align:center;line-height:12px">X</div>
<div class="b" style="left:1265px;top:116px;width:12px;height:12px;text-align:center;line-height:12px">X</div>
<div class="b" style="left:1265px;top:130px;width:12px;height:12px;text-align:center;line-height:12px">X</div>
<div class="b" style="left:932px;top:145px;width:345px;height:11px;text-align:center;line-height:11px;color:#c4c4c4">Add Prefab</div>

<div class="t l" style="top:167px">Brush Radius</div><div class="f" style="left:1032px;top:166px;width:245px">5</div>
<div class="t l" style="top:180px">Density</div>
<div style="left:1032px;top:185px;width:208px;height:1px;background:#5a5a5a"></div>
<div style="left:1043px;top:182px;width:6px;height:6px;border-radius:50%;background:#9a9a9a"></div>
<div class="f" style="left:1244px;top:179px;width:34px;padding-left:2px">10</div>
<div class="t l" style="top:194px">Rotation Min</div>
<div class="t" style="left:942px;top:207px;color:#999">X</div><div class="f" style="left:952px;top:206px;width:99px">0</div>
<div class="t" style="left:1056px;top:207px;color:#999">Y</div><div class="f" style="left:1064px;top:206px;width:100px">0</div>
<div class="t" style="left:1169px;top:207px;color:#999">Z</div><div class="f" style="left:1177px;top:206px;width:100px">0</div>
<div class="t l" style="top:220px">Rotation Max</div>
<div class="t" style="left:942px;top:233px;color:#999">X</div><div class="f" style="left:952px;top:233px;width:99px">0</div>
<div class="t" style="left:1056px;top:233px;color:#999">Y</div><div class="f" style="left:1064px;top:233px;width:100px">360</div>
<div class="t" style="left:1169px;top:233px;color:#999">Z</div><div class="f" style="left:1177px;top:233px;width:100px">0</div>
<div class="t l" style="top:247px">Scale Range</div>
<div class="t" style="left:942px;top:260px;color:#999">X</div><div class="f" style="left:952px;top:259px;width:155px">1</div>
<div class="t" style="left:1113px;top:260px;color:#999">Y</div><div class="f" style="left:1121px;top:259px;width:156px">1</div>
<div class="t l" style="top:274px">Align To Normal</div>
<div class="f" style="left:1033px;top:274px;width:9px;height:10px"></div>
<svg style="left:1034px;top:276px" width="7" height="6"><path d="M.7 3l2 2 3.500-4" fill="none" stroke="#ddd" stroke-width="1.200"/></svg>
<div class="t l" style="top:287px">Preview In Scene</div>
<div class="f" style="left:1033px;top:287px;width:9px;height:10px"></div>
<svg style="left:1034px;top:289px" width="7" height="6"><path d="M.7 3l2 2 3.500-4" fill="none" stroke="#ddd" stroke-width="1.200"/></svg>
<div class="t l" style="top:300px">Preview Color</div>
<div style="left:1033px;top:300px;width:232px;height:9px;background:#0f0"></div>
<div style="left:1033px;top:309px;width:232px;height:2px;background:#000"></div>
<div style="left:1033px;top:309px;width:58px;height:2px;background:#fff"></div>
<svg style="left:1268px;top:301px" width="9" height="9"><path d="M1 8L6 3M5 1l3 3" stroke="#bbb" stroke-width="1.500"/></svg>
<div class="t l" style="top:313px">Parent</div>
<div class="f" style="left:1032px;top:313px;width:245px;color:#8a8a8a">None (Game Object)</div>
<svg style="left:1267px;top:315px" width="8" height="8" fill="none" stroke="#aaa"><circle cx="4" cy="4" r="3"/><circle cx="4" cy="4" r="1" fill="#aaa"/></svg>
<div class="t l" style="top:327px">Placement Layers</div>
<div class="f" style="left:1033px;top:326px;width:244px;background:#515151;color:#c4c4c4">Default</div>
<svg style="left:1268px;top:330px" width="6" height="4"><path d="M0 0h6L3 3.500z" fill="#ccc"/></svg>
<div class="t l" style="top:340px">Normal Offset</div>
<div class="f" style="left:1032px;top:340px;width:245px">0.5</div>
<div class="t l" style="top:353px">Local Offset</div>
<div class="t" style="left:942px;top:366px;color:#999">X</div><div class="f" style="left:952px;top:366px;width:99px">0</div>
<div class="t" style="left:1056px;top:366px;color:#999">Y</div><div class="f" style="left:1064px;top:366px;width:100px">0</div>
<div class="t" style="left:1169px;top:366px;color:#999">Z</div><div class="f" style="left:1177px;top:366px;width:100px">0</div>

<!-- project -->
<div style="left:0;top:438px;width:928px;height:18px;background:#191919"></div>
<div style="left:0;top:439px;width:54px;height:17px;background:#3c3c3c"></div>
<svg style="left:6px;top:444px" width="9" height="7"><path d="M0 0h4l1 1.500h4V7H0z" fill="#aaa"/></svg>
<div class="t" style="left:17px;top:442px;color:#aaa">Project</div>
<div style="left:61px;top:444px;width:7px;height:7px;background:#aaa"></div>
<div class="t" style="left:72px;top:442px;color:#aaa">Console</div>
<svg style="left:118px;top:444px" width="10" height="8" fill="none" stroke="#aaa"><path d="M0 1h5M4 1l3 3h3M4 5h3M9 5v3"/></svg>
<div class="t" style="left:130px;top:442px;color:#aaa">Unity Version Control</div>
<svg style="left:227px;top:444px" width="8" height="8"><circle cx="4" cy="4" r="4" fill="#bbb"/><path d="M4 2v2.500h2" stroke="#333" fill="none"/></svg>
<div class="t" style="left:238px;top:442px;color:#aaa">Animation</div>
<svg style="left:293px;top:444px" width="8" height="8" stroke="#aaa"><path d="M1 0v8M4 0v8M7 0v8" /></svg>
<div class="t" style="left:304px;top:442px;color:#aaa">Audio Mixer</div>
<svg style="left:905px;top:443px" width="7" height="8" fill="none" stroke="#bbb"><path d="M.5 3.500h6v4h-6zM2 3.500V1h3v2.500"/></svg>
<svg style="left:918px;top:443px" width="2" height="8"><path d="M0 0h2v2H0zM0 3h2v2H0zM0 6h2v2H0z" fill="#bbb"/></svg>
<div style="left:0;top:456px;width:928px;height:14px;background:#3c3c3c"></div>
<svg style="left:4px;top:458px" width="20" height="10"><path d="M4 1v8M0 5h8" stroke="#ccc" stroke-width="1.400"/><path d="M12 4h4l-2 2.500z" fill="#ccc"/></svg>
<div style="left:618px;top:457px;width:199px;height:11px;background:#2a2a2a;border-radius:2px"></div>
<svg style="left:620px;top:460px" width="6" height="6" fill="none" stroke="#aaa"><circle cx="2.500" cy="2.500" r="1.800"/><path d="M4 4l2 2"/></svg>
<svg style="left:820px;top:457px" width="10" height="10" fill="none" stroke="#aaa"><path d="M3 .5h6.500v6.500M.5 3h6.500v6.500H.5z"/></svg>
<svg style="left:836px;top:457px" width="90" height="11"><path d="M1 0h4v4H1zM6 4l3 3-3 3zM1 5h4v5H1z" fill="#aaa"/><path d="M18 6l4-4h3v3l-4 4z" fill="#aaa"/><circle cx="38.500" cy="5.500" r="4.500" fill="#ccc"/><path d="M38.500 3v3M38.500 7v1" stroke="#333"/><path d="M56 1l1.300 3 3 .3-2.300 2 .7 3-2.700-1.500-2.700 1.500.7-3-2.300-2 3-.3z" fill="#888"/><ellipse cx="74" cy="6" rx="4" ry="2.500" fill="none" stroke="#777"/></svg>
<div class="t" style="left:914px;top:457px;color:#888">21</div>
<div style="left:0;top:470px;width:144px;height:203px;background:#383838"></div>
<div style="left:144px;top:470px;width:1px;height:203px;background:#232323"></div>
<svg style="left:4px;top:472px" width="6" height="6"><path d="M0 1h5L2.500 4.500z" fill="#666"/></svg>
<svg style="left:12px;top:470px" width="9" height="9"><path d="M4.500 0l1.400 3 3.100.3-2.400 2 .8 3.100-2.900-1.600L1.600 8.400l.8-3.100L0 3.300 3.100 3z" fill="#bbb"/></svg>
<div class="t" style="left:24px;top:469px;font-weight:bold;font-size:8px;color:#b8b8b8">Favorites</div>
<svg style="left:21px;top:481px" width="9" height="34" fill="none" stroke="#999"><circle cx="3.500" cy="3.500" r="2.500"/><path d="M5.300 5.300L8 8"/><circle cx="3.500" cy="14" r="2.500"/><path d="M5.300 15.800L8 18.500"/><circle cx="3.500" cy="24.500" r="2.500"/><path d="M5.300 26.300L8 29"/></svg>
<div class="t" style="left:32px;top:480px;color:#aaa">All Materials</div>
<div class="t" style="left:32px;top:490px;color:#aaa">All Models</div>
<div class="t" style="left:32px;top:501px;color:#aaa">All Prefabs</div>
<div style="left:0;top:522px;width:144px;height:11px;background:#4a4a4a"></div>
<svg style="left:4px;top:525px" width="5" height="17"><path d="M0 0l4 2.500L0 5zM0 11l4 2.500L0 16z" fill="#666"/></svg>
<svg style="left:12px;top:524px" width="9" height="18"><path d="M0 0h4l1 1.500h4V7H0zM0 11h4l1 1.500h4V18H0z" fill="#bbb"/></svg>
<div class="t" style="left:24px;top:522px;font-weight:bold;font-size:8px;color:#bdbdbd">Assets</div>
<div class="t" style="left:24px;top:533px;font-weight:bold;font-size:8px;color:#b8b8b8">Packages</div>
<div style="left:145px;top:470px;width:783px;height:203px;background:#333"></div>
<div style="left:145px;top:470px;width:783px;height:13px;background:#3f3f3f"></div>
<div class="t" style="left:148px;top:471px;font-weight:bold;font-size:8px;color:#b0b0b0">Assets</div>
<div style="left:145px;top:659px;width:783px;height:14px;background:#3c3c3c"></div>
<div style="left:881px;top:666px;width:32px;height:1px;background:#5a5a5a"></div>
<div style="left:911px;top:663px;width:6px;height:6px;border-radius:50%;background:#9a9a9a"></div>

<!-- folders -->
<svg style="left:165px;top:502px" width="48" height="40"><use href="#fo"/></svg>
<svg style="left:242px;top:502px" width="48" height="40"><use href="#fo"/></svg>
<svg style="left:319px;top:502px" width="48" height="40"><use href="#fo"/></svg>
<svg style="left:397px;top:502px" width="48" height="40"><use href="#fo"/></svg>
<div class="t c" style="left:151px;top:554px">Editor</div>
<div class="t c" style="left:228px;top:554px">Scenes</div>
<div class="t c" style="left:305px;top:554px">Settings</div>
<div class="t c" style="left:382px;top:554px">TutorialInfo</div>

<!-- thumbs -->
<svg style="left:467px;top:491px" width="62" height="62"><rect width="62" height="62" fill="#595959"/><circle cx="31" cy="31" r="28" fill="url(#sg)" stroke="#8a8a70" stroke-width=".8"/></svg>
<svg style="left:544px;top:491px" width="62" height="62"><rect width="62" height="62" fill="#595959"/><path d="M39 20l15-8-2 35-13 12z" fill="url(#cs)"/><path d="M4 15l35 5v39L6 49z" fill="#3f9186"/><path d="M4 15l22-6 28 3-15 8z" fill="#5cb8a9"/></svg>
<svg style="left:621px;top:491px" width="62" height="62"><rect width="62" height="62" fill="#595959"/><circle cx="31" cy="31" r="28" fill="url(#st)" stroke="#7a9a90" stroke-width=".8"/></svg>
<svg style="left:698px;top:491px" width="62" height="62"><rect width="62" height="62" fill="#595959"/><path d="M39 20l15-8-2 35-13 12z" fill="url(#cs)"/><path d="M4 15l35 5v39L6 49z" fill="#96683a"/><path d="M4 15l22-6 28 3-15 8z" fill="#bb946d"/></svg>
<svg style="left:775px;top:491px" width="62" height="62"><rect width="62" height="62" fill="#595959"/><circle cx="31" cy="31" r="28" fill="url(#so)" stroke="#9a8a78" stroke-width=".8"/></svg>
<svg style="left:852px;top:491px" width="62" height="62"><rect width="62" height="62" fill="#595959"/><path d="M39 20l15-8-2 35-13 12z" fill="url(#cs)"/><path d="M4 15l35 5v39L6 49z" fill="#96683a"/><path d="M4 15l22-6 28 3-15 8z" fill="#bb946d"/></svg>
<svg style="left:159px;top:575px" width="62" height="62"><rect width="62" height="62" fill="#595959"/><circle cx="31" cy="31" r="28" fill="url(#sr)" stroke="#a08088" stroke-width=".8"/></svg>
<svg style="left:492px;top:555px" width="8" height="8"><circle cx="4" cy="4" r="3.500" fill="#6fcdf7"/><path d="M2 6a3 3 0 0 0 5-2" fill="none" stroke="#222" stroke-width=".7"/></svg>
<div class="t c" style="left:463px;top:554px;width:80px;text-indent:3px">1</div>
<svg style="left:569px;top:555px" width="8" height="8" viewBox="0 0 10 10"><use href="#c"/></svg>
<div class="t c" style="left:540px;top:554px;width:80px;text-indent:3px">1</div>
<svg style="left:645px;top:555px" width="8" height="8"><circle cx="4" cy="4" r="3.500" fill="#6fcdf7"/><path d="M2 6a3 3 0 0 0 5-2" fill="none" stroke="#222" stroke-width=".7"/></svg>
<div class="t c" style="left:616px;top:554px;width:80px;text-indent:3px">2</div>
<svg style="left:722px;top:555px" width="8" height="8" viewBox="0 0 10 10"><use href="#c"/></svg>
<div class="t c" style="left:693px;top:554px;width:80px;text-indent:3px">2</div>
<svg style="left:799px;top:555px" width="8" height="8"><circle cx="4" cy="4" r="3.500" fill="#6fcdf7"/><path d="M2 6a3 3 0 0 0 5-2" fill="none" stroke="#222" stroke-width=".7"/></svg>
<div class="t c" style="left:771px;top:554px;width:80px;text-indent:3px">3</div>
<svg style="left:876px;top:555px" width="8" height="8" viewBox="0 0 10 10"><use href="#c"/></svg>
<div class="t c" style="left:848px;top:554px;width:80px;text-indent:3px">3</div>
<svg style="left:183px;top:638px" width="8" height="8"><circle cx="4" cy="4" r="3.500" fill="#6fcdf7"/><path d="M2 6a3 3 0 0 0 5-2" fill="none" stroke="#222" stroke-width=".7"/></svg>
<div class="t c" style="left:154px;top:637px;width:80px;text-indent:3px">4</div>

<!-- map icon -->
<svg style="left:236px;top:579px" width="72" height="54" viewBox="0 0 72 54">
<path d="M2.300 5.300L19 2v39L2.300 46z" fill="#f2f2f2"/><path d="M19 2l22 4.700V46L19 41z" fill="#b8b8b8"/><path d="M41 6.700L58 2.600V41L41 46z" fill="#f4f4f4"/>
<path d="M49 17.700L36.700 33.300 44 34.300 42.300 51 55.700 30H49z" fill="#25a9de"/>
<circle cx="62.300" cy="26" r="7.500" fill="#c8c8c8"/><circle cx="62.300" cy="26" r="4.800" fill="#e8e8e8"/><path d="M60.500 23l5 3-5 3z" fill="#444"/>
</svg>
<div class="t c" style="left:228px;top:637px">InputSystem_Acti...</div>
<!-- readme icon -->
<svg style="left:326px;top:586px" width="42" height="42" viewBox="0 0 42 42">
<path d="M15 2L31 11V16M1 11L15 2M1 11L15 19 31 11M15 19V34M1 11V26L15 34 20 31" fill="none" stroke="#59c3ee" stroke-width="1.800" stroke-linejoin="round"/>
<path d="M29 18.500h-1.500c-1.500 0-2 1-2 2v5c0 1.500-1 2-2 2 1 0 2 .5 2 2v5c0 1 .5 2 2 2H29M33.500 18.500H35c1.500 0 2 1 2 2v5c0 1.500 1 2 2 2-1 0-2 .5-2 2v5c0 1-.5 2-2 2h-1.500" fill="none" stroke="#f0622e" stroke-width="1.800"/>
</svg>
<div class="t c" style="left:305px;top:637px">Readme</div>

<!-- status -->
<div style="left:0;top:673px;width:1280px;height:15px;background:#191919"></div>
<svg style="left:1230px;top:676px" width="44" height="10"><path d="M1 8l3-7 3 7zM3 4h5v4" fill="#aaa"/><path d="M16 1h8v7h-8z" fill="#999"/><circle cx="39" cy="5" r="3.800" fill="none" stroke="#aaa"/><path d="M37 5l1.500 1.500 2.500-3" fill="none" stroke="#aaa"/></svg>
</body></html>
